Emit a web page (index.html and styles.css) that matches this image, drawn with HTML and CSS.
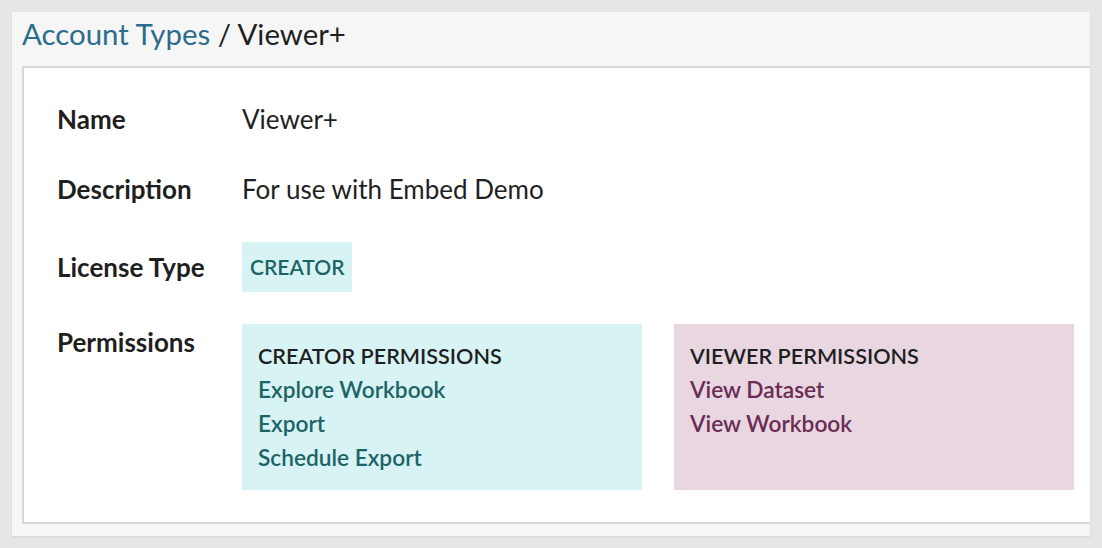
FILE: index.html
```html
<!DOCTYPE html>
<html>
<head>
<meta charset="utf-8">
<link rel="stylesheet" href="styles.css">
</head>
<body>
<div class="panel">
  <h1 class="title"><a class="crumb">Account Types</a> / Viewer+</h1>
  <div class="card">
    <div class="row row-text">
      <div class="label">Name</div>
      <div class="value">Viewer+</div>
    </div>
    <div class="row row-text">
      <div class="label">Description</div>
      <div class="value">For use with Embed Demo</div>
    </div>
    <div class="row row-license">
      <div class="label">License Type</div>
      <div class="value"><span class="badge">CREATOR</span></div>
    </div>
    <div class="row row-perms">
      <div class="label">Permissions</div>
      <div class="boxes">
        <div class="box box-creator">
          <div class="box-head">CREATOR PERMISSIONS</div>
          <div class="box-item">Explore Workbook</div>
          <div class="box-item">Export</div>
          <div class="box-item">Schedule Export</div>
        </div>
        <div class="box box-viewer">
          <div class="box-head">VIEWER PERMISSIONS</div>
          <div class="box-item">View Dataset</div>
          <div class="box-item">View Workbook</div>
        </div>
      </div>
    </div>
  </div>
</div>
</body>
</html>
```

FILE: styles.css
```css
html, body {
  margin: 0;
  padding: 0;
}
body {
  background: #e6e6e6;
  padding: 12px;
  font-family: Lato, "Open Sans", sans-serif;
  color: #1f1f1f;
}
.panel {
  width: 1078px;
  height: 524px;
  background: #f6f6f6;
  overflow: hidden;
  box-shadow: 0 1px 2px rgba(0, 0, 0, 0.08);
}
.title {
  margin: 0;
  height: 52px;
  padding: 2px 0 0 10px;
  font-size: 29.4px;
  line-height: 40px;
  font-weight: 400;
  color: #1f1f1f;
}
.crumb {
  color: #2b6d8c;
}
.card {
  margin-left: 10px;
  width: 1100px;
  height: 458px;
  background: #ffffff;
  border: 2px solid #d6d6d6;
  padding: 33px 0 0 33px;
  box-sizing: border-box;
}
.row {
  display: grid;
  grid-template-columns: 185px auto;
  font-size: 26px;
  line-height: 36px;
}
.row-text + .row-text {
  margin-top: 34px;
}
.row-license {
  margin-top: 35px;
  align-items: center;
}
.row-perms {
  margin-top: 32px;
  align-items: start;
}
.label {
  font-weight: 700;
}
.value {
  font-weight: 400;
}
.badge {
  display: flex;
  align-items: center;
  width: max-content;
  height: 50px;
  padding: 0 8px;
  background: #d8f3f4;
  color: #1d6466;
  font-weight: 600;
  font-size: 21px;
}
.boxes {
  display: flex;
  gap: 32px;
}
.box {
  width: 400px;
  height: 166px;
  box-sizing: border-box;
  padding: 15px 16px;
  font-size: 22.7px;
  line-height: 34px;
  font-weight: 600;
}
.box-head {
  color: #1f1f1f;
  font-size: 21.6px;
}
.box-creator {
  background: #d8f3f4;
  color: #1d6466;
}
.box-viewer {
  background: #e8d6e0;
  color: #6a2c53;
}
```
